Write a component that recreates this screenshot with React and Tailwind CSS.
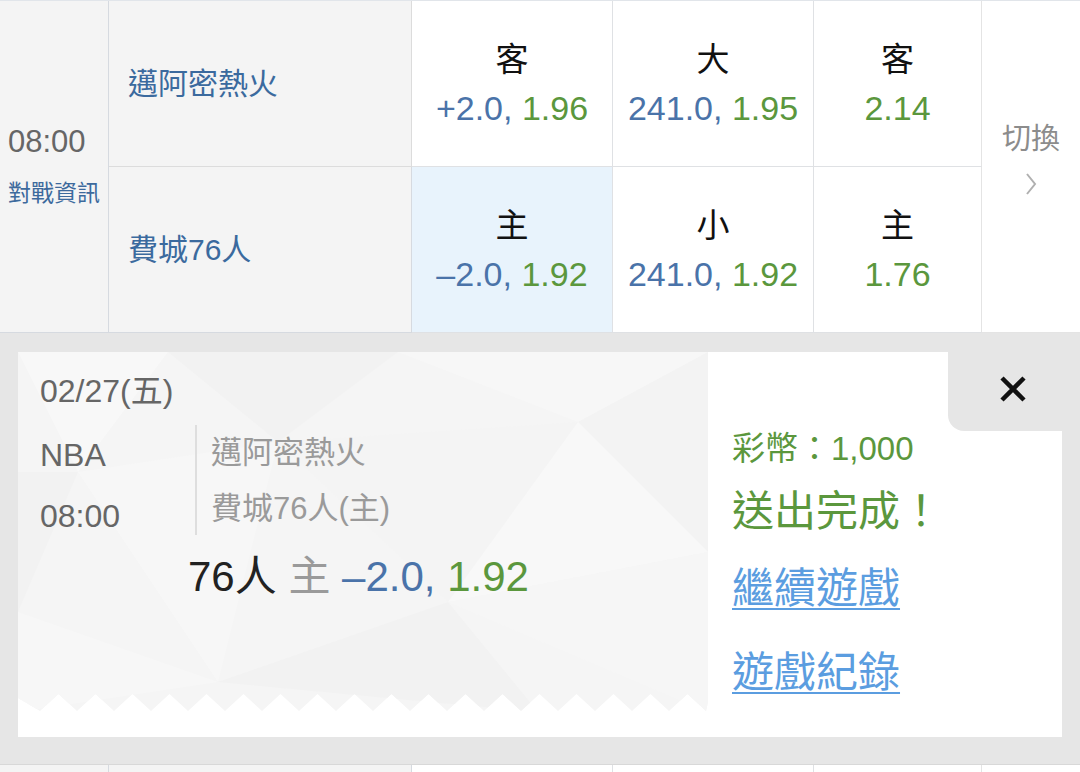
import React from "react";

const FONT = "font-['Liberation_Sans','Noto_Sans_CJK_TC',sans-serif]";

const odds = [
  [
    { label: "客", line: "+2.0,", price: "1.96" },
    { label: "大", line: "241.0,", price: "1.95" },
    { label: "客", line: "", price: "2.14" },
  ],
  [
    { label: "主", line: "–2.0,", price: "1.92", picked: true },
    { label: "小", line: "241.0,", price: "1.92" },
    { label: "主", line: "", price: "1.76" },
  ],
];

function OddsCell({ cell, last }) {
  return (
    <div
      className={`flex flex-col items-center justify-center border-b border-r border-[#dfe1e4] ${
        cell.picked ? "bg-[#e8f3fc]" : "bg-white"
      } ${last ? "border-r-[#e4e4e4]" : ""}`}
    >
      <div className="text-[33px] leading-[48px] text-[#111]">{cell.label}</div>
      <div className="text-[34px] leading-[48px] whitespace-nowrap">
        {cell.line && <span className="text-[#4a73a9]">{cell.line} </span>}
        <span className="text-[#5b973d]">{cell.price}</span>
      </div>
    </div>
  );
}

function TicketBg() {
  // zigzag bottom edge
  const pts = [];
  for (let x = 22; x < 700; x += 37) {
    pts.push([x, 359]);
    pts.push([x + 18.5, 342]);
  }
  let edge = "M0 0 H690 V350 ";
  const rev = [...pts].reverse().filter((p) => p[0] <= 690);
  edge += rev.map((p) => `L${p[0]} ${p[1]}`).join(" ");
  edge += " L0 346 Z";
  return (
    <svg className="absolute left-0 top-0" width="690" height="360" viewBox="0 0 690 360">
      <defs>
        <clipPath id="tk">
          <path d={edge} />
        </clipPath>
      </defs>
      <g clipPath="url(#tk)">
        <rect width="690" height="360" fill="#f5f5f5" />
        <polygon points="0,0 150,0 60,120" fill="#f8f8f8" />
        <polygon points="150,0 380,0 260,90" fill="#f2f2f2" />
        <polygon points="380,0 690,0 560,70" fill="#f7f7f7" />
        <polygon points="560,70 690,0 690,200" fill="#f3f3f3" />
        <polygon points="0,120 60,120 0,260" fill="#f2f2f2" />
        <polygon points="60,120 260,90 200,330" fill="#f7f7f7" />
        <polygon points="260,90 560,70 430,250" fill="#f4f4f4" />
        <polygon points="430,250 560,70 690,200" fill="#f8f8f8" />
        <polygon points="0,260 200,330 0,360" fill="#f7f7f7" />
        <polygon points="200,330 430,250 520,360" fill="#f2f2f2" />
        <polygon points="430,250 690,200 690,360" fill="#f6f6f6" />
      </g>
    </svg>
  );
}

export default function App() {
  return (
    <div className={`${FONT} w-[1080px] bg-white`}>
      {/* match table */}
      <div className="grid grid-cols-[109px_303px_201px_201px_168px_1fr] grid-rows-[166px_166px] border-t border-[#e1e5ea]">
        <div className="row-span-2 flex flex-col justify-center border-r border-b border-[#d6dae0] bg-[#f4f4f4] pl-2 pb-[4px]">
          <div className="text-[31px] leading-[40px] text-[#666]">08:00</div>
          <div className="mt-4 text-[23px] leading-[30px] text-[#3d6a9d]">對戰資訊</div>
        </div>
        <div className="flex items-center border-r border-b border-[#dcdcdc] bg-[#f4f4f4] pl-[19px] text-[30px] text-[#3b6a9e]">
          邁阿密熱火
        </div>
        {odds[0].map((c, i) => (
          <OddsCell key={"a" + i} cell={c} last={i === 2} />
        ))}
        <div className="row-span-2 flex flex-col items-center justify-center border-b border-[#e4e4e4] bg-white pb-[18px]">
          <div className="text-[29px] leading-[40px] text-[#8c8c8c]">切換</div>
          <svg className="mt-[13px]" width="14" height="24" viewBox="0 0 14 24">
            <path d="M3 2 L11 12 L3 22" fill="none" stroke="#b0b0b0" strokeWidth="2" />
          </svg>
        </div>
        <div className="flex items-center border-r border-b border-[#d6dae0] bg-[#f4f4f4] pl-[19px] text-[30px] text-[#3b6a9e]">
          費城76人
        </div>
        {odds[1].map((c, i) => (
          <OddsCell key={"b" + i} cell={c} last={i === 2} />
        ))}
      </div>

      {/* bet confirmation overlay */}
      <div className="bg-[#e6e6e6] px-[18px] pt-[19px] pb-[27px]">
        <div className="relative flex h-[385px] bg-white">
          <div className="relative h-full w-[690px]">
            <TicketBg />
            <div className="relative pl-[22px] pt-[17px]">
              <div className="text-[32px] leading-[44px] text-[#666]">02/27(五)</div>
              <div className="mt-3 flex">
                <div className="w-[155px] text-[32px] leading-[61px] text-[#666]">
                  <div>NBA</div>
                  <div>08:00</div>
                </div>
                <div className="h-[110px] border-l-2 border-[#dedede] pl-[14px] text-[31px] leading-[56px] text-[#9a9a9a]">
                  <div>邁阿密熱火</div>
                  <div>費城76人(主)</div>
                </div>
              </div>
              <div className="ml-[148px] mt-[2px] text-[42px] leading-[56px] whitespace-nowrap">
                <span className="text-[#222]">76人</span>{" "}
                <span className="text-[#9a9a9a]">主</span>{" "}
                <span className="text-[#4a73a9]">–2.0,</span>{" "}
                <span className="text-[#5b973d]">1.92</span>
              </div>
            </div>
          </div>

          <div className="flex-1 pl-6 pt-[75px]">
            <div className="text-[33px] leading-[44px] text-[#5b973d]">彩幣：1,000</div>
            <div className="mt-[13px] text-[42px] leading-[56px] text-[#5b973d]">送出完成！</div>
            <div className="mt-[21px] text-[42px] leading-[56px]">
              <a className="text-[#5b9de0] underline decoration-2 underline-offset-[5px]">繼續遊戲</a>
            </div>
            <div className="mt-[28px] text-[42px] leading-[56px]">
              <a className="text-[#5b9de0] underline decoration-2 underline-offset-[5px]">遊戲紀錄</a>
            </div>
          </div>

          <div className="absolute right-0 top-0 h-[79px] w-[114px] rounded-bl-[16px] bg-[#e6e6e6]">
            <svg className="absolute left-[51px] top-[23px]" width="28" height="28" viewBox="0 0 28 28">
              <path d="M3 3 L25 25 M25 3 L3 25" stroke="#111" strokeWidth="4.5" strokeLinecap="butt" />
            </svg>
          </div>
        </div>
      </div>

      {/* next match row (cut off) */}
      <div className="grid h-[60px] grid-cols-[109px_303px_201px_201px_168px_1fr] border-t border-[#d8d8d8]">
        <div className="border-r border-[#d6dae0] bg-[#f4f4f4]" />
        <div className="border-r border-[#d6dae0] bg-[#f4f4f4]" />
        <div className="border-r border-[#dfe1e4] bg-white" />
        <div className="border-r border-[#dfe1e4] bg-white" />
        <div className="border-r border-[#e4e4e4] bg-white" />
        <div className="bg-white" />
      </div>
    </div>
  );
}
